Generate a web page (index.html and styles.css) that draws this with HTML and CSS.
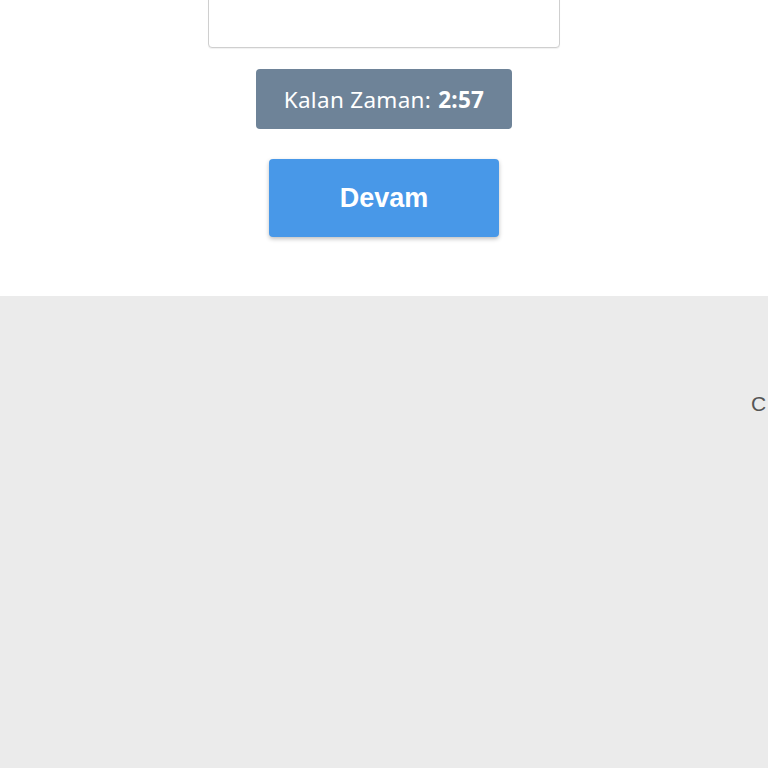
FILE: index.html
```html
<!DOCTYPE html>
<html lang="tr">
<head>
<meta charset="utf-8">
<link rel="stylesheet" href="styles.css">
</head>
<body>
<main class="panel">
  <input class="answer" type="text">
  <div class="timer">Kalan Zaman: <strong>2:57</strong></div>
  <button class="next">Devam</button>
</main>
<footer class="footer">
  <p class="footnote">C</p>
</footer>
</body>
</html>
```
FILE: styles.css
```css
html, body {
  margin: 0;
  padding: 0;
  overflow: hidden;
  background: #ebebeb;
}
.panel {
  background: #ffffff;
  height: 296px;
  display: flex;
  flex-direction: column;
  align-items: center;
  font-family: "Noto Sans", "Liberation Sans", sans-serif;
}
.answer {
  box-sizing: border-box;
  width: 352px;
  height: 80px;
  margin: -32px 0 0 0;
  border: 1px solid #cfcfcf;
  border-radius: 4px;
  background: #fff;
  box-shadow: 0 1px 1px rgba(0,0,0,0.06);
}
.timer {
  box-sizing: border-box;
  margin-top: 21px;
  width: 256px;
  height: 60px;
  background: #6e8398;
  color: #ffffff;
  border-radius: 4px;
  display: flex;
  align-items: center;
  justify-content: center;
  font-size: 22.5px;
  letter-spacing: 0.3px;
}
.timer strong {
  font-weight: 700;
  margin-left: 7px;
}
.next {
  box-sizing: border-box;
  margin-top: 30px;
  width: 230px;
  height: 78px;
  padding-top: 2px;
  background: #4898e8;
  color: #ffffff;
  border: none;
  border-radius: 4px;
  box-shadow: 0 2px 4px rgba(0,0,0,0.25);
  font-family: "Liberation Sans", Arial, sans-serif;
  font-weight: 700;
  font-size: 27px;
}
.footer {
  height: 472px;
  background: #ebebeb;
}
.footnote {
  margin: 0;
  padding: 96px 0 0 751px;
  white-space: nowrap;
  font-family: "Liberation Sans", sans-serif;
  font-size: 21px;
  color: #555;
}
```
